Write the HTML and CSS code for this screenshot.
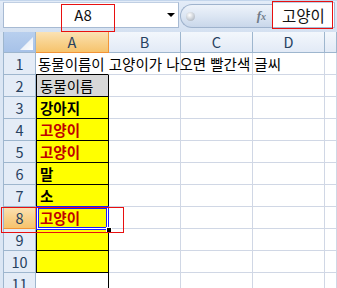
FILE: index.html
```html
<!DOCTYPE html>
<html lang="ko">
<head>
<meta charset="utf-8">
<link rel="stylesheet" href="styles.css">
</head>
<body>
<div class="app">
  <div class="toolbar">
    <div class="namebox">
      <span class="name">A8</span>
      <span class="dd"></span>
    </div>
    <div class="fbar">
      <span class="knob"></span>
      <span class="fx">f<span class="fxs">x</span></span>
    </div>
    <div class="finput">고양이</div>
  </div>
  <div class="sheet">
    <div class="corner"><svg width="15" height="15" viewBox="0 0 15 15"><defs><linearGradient id="tg" x1="0" y1="0" x2="1" y2="1"><stop offset="0" stop-color="#dde6f3"/><stop offset="1" stop-color="#ffffff"/></linearGradient></defs><polygon points="14,1 14,14 1,14" fill="url(#tg)"/></svg></div>
    <div class="ch sel">A</div><div class="ch">B</div><div class="ch">C</div><div class="ch">D</div><div class="ch"></div>

    <div class="rh">1</div><div class="c a1 long">동물이름이 고양이가 나오면 빨간색 글씨</div><div class="c"></div><div class="c"></div><div class="c"></div><div class="c"></div>
    <div class="rh">2</div><div class="c ab gray">동물이름</div><div class="c"></div><div class="c"></div><div class="c"></div><div class="c"></div>
    <div class="rh">3</div><div class="c ab yel b">강아지</div><div class="c"></div><div class="c"></div><div class="c"></div><div class="c"></div>
    <div class="rh">4</div><div class="c ab yel b red">고양이</div><div class="c"></div><div class="c"></div><div class="c"></div><div class="c"></div>
    <div class="rh">5</div><div class="c ab yel b red">고양이</div><div class="c"></div><div class="c"></div><div class="c"></div><div class="c"></div>
    <div class="rh">6</div><div class="c ab yel b">말</div><div class="c"></div><div class="c"></div><div class="c"></div><div class="c"></div>
    <div class="rh">7</div><div class="c ab yel b">소</div><div class="c"></div><div class="c"></div><div class="c"></div><div class="c"></div>
    <div class="rh sel">8</div><div class="c ab yel b red">고양이</div><div class="c"></div><div class="c"></div><div class="c"></div><div class="c"></div>
    <div class="rh">9</div><div class="c ab yel"></div><div class="c"></div><div class="c"></div><div class="c"></div><div class="c"></div>
    <div class="rh">10</div><div class="c ab yel"></div><div class="c"></div><div class="c"></div><div class="c"></div><div class="c"></div>
    <div class="rh">11</div><div class="c a11"></div><div class="c"></div><div class="c"></div><div class="c"></div><div class="c"></div>

    <div class="selbox"><span class="handle"></span></div>
  </div>
  <div class="mark mark-name"></div>
  <div class="mark mark-formula"></div>
  <div class="mark mark-row"></div>
</div>
</body>
</html>
```

FILE: styles.css
```css
* { box-sizing: border-box; }
html, body { margin: 0; padding: 0; }
body {
  width: 337px;
  height: 288px;
  overflow: hidden;
  background: #ffffff;
  font-family: "Noto Sans CJK KR", "Noto Sans", sans-serif;
}
.app {
  position: relative;
  width: 337px;
  height: 288px;
  overflow: hidden;
}
.toolbar {
  height: 32px;
  display: flex;
  align-items: flex-start;
  padding-top: 2px;
  padding-left: 3px;
  border-top: 1px solid #c4d6ec;
  background: linear-gradient(#e3ecf8, #d5e1f1);
}
.namebox {
  width: 176px;
  height: 26px;
  margin-top: -1px;
  background: #ffffff;
  border: 1px solid #a7bad3;
  border-top-color: #c0cfe3;
  display: flex;
  align-items: center;
}
.name {
  width: 158px;
  text-align: center;
  font-size: 15px;
  color: #111;
  line-height: 24px;
}
.dd {
  width: 0;
  height: 0;
  margin-left: 5px;
  border-left: 4px solid transparent;
  border-right: 4px solid transparent;
  border-top: 4px solid #000;
}
.fbar {
  width: 92px;
  height: 24px;
  margin-top: 1px;
  margin-left: 1px;
  border: 1px solid #9fb3cd;
  border-right: none;
  border-radius: 12px 0 0 12px;
  background: linear-gradient(#eef3fa, #dce6f3 50%, #c9d7ea);
  display: flex;
  align-items: center;
  padding-left: 5px;
}
.knob {
  width: 9px;
  height: 9px;
  border-radius: 50%;
  background: radial-gradient(circle at 40% 35%, #ffffff, #b9c0c9 70%, #9aa3ae);
}
.fx {
  margin-left: auto;
  margin-right: 6px;
  font-family: "Liberation Serif", serif;
  font-style: italic;
  font-weight: bold;
  font-size: 13px;
  color: #707b88;
  line-height: 20px;
}
.fxs { font-size: 10px; }
.finput {
  width: 63px;
  height: 26px;
  margin-top: -1px;
  background: #ffffff;
  border: 1px solid #a7bad3;
  border-top-color: #c0cfe3;
  font-size: 15.5px;
  line-height: 24px;
  padding-left: 9px;
  color: #111;
}
.sheet {
  position: relative;
  display: grid;
  grid-template-columns: 33px 73px 72px 72px 72px 1fr;
  grid-template-rows: 21px repeat(11, 22px);
  padding-left: 3px;
  background: #ffffff;
  height: 256px;
  overflow: hidden;
  box-shadow: inset 3px 0 0 #dbe6f4;
}
.corner {
  background: linear-gradient(#b8cfee, #a7c2e8);
  border-right: 1px solid #9eb6ce;
  border-bottom: 1px solid #9eb6ce;
  border-left: 1px solid #9eb6ce;
  display: flex;
  align-items: flex-end;
  justify-content: flex-end;
  padding: 0 1px 1px 0;
}
.corner svg { display: block; }
.ch {
  background: linear-gradient(#f3f7fc, #e2eaf6);
  border-right: 1px solid #9eb6ce;
  border-bottom: 1px solid #9eb6ce;
  text-align: center;
  font-size: 14.5px;
  line-height: 20px;
  color: #27415f;
}
.ch.sel, .rh.sel {
  background: linear-gradient(#fbe2b4, #f8d28e 50%, #f6c36d);
  border-color: #f29436;
}
.ch.sel { border-bottom: 1px solid #f29436; }
.rh {
  background: #e4ecf7;
  border-left: 1px solid #9eb6ce;
  border-right: 1px solid #9eb6ce;
  border-bottom: 1px solid #9eb6ce;
  text-align: center;
  font-size: 14.5px;
  line-height: 21px;
  color: #27415f;
}
.rh.sel { border-left-color: #9eb6ce; border-bottom-color: #f29436; }
.c {
  border-right: 1px solid #d0d7e5;
  border-bottom: 1px solid #d0d7e5;
  font-size: 14.5px;
  line-height: 22px;
  padding-left: 3px;
  white-space: nowrap;
  color: #000;
}
.long {
  overflow: visible;
  position: relative;
  z-index: 1;
  border-right-color: transparent;
}
.a1 { border-bottom: 1px solid #000; padding-left: 2px; }
.ab {
  border-left: 1px solid #000;
  border-right: 1px solid #000;
  border-bottom: 1px solid #000;
  padding-left: 3px;
}
.a11 { border-right-color: #000; }
.gray { background: #d8d8d8; }
.yel { background: #ffff00; }
.b { font-weight: 700; }
.red { color: #c00000; }
.selbox {
  position: absolute;
  left: 36px;
  top: 174px;
  width: 73px;
  height: 24px;
  border: 1px solid #1a1aff;
  box-shadow: inset 0 0 0 1px #ffffff, inset 0 0 0 2px #1a1aff;
}
.handle {
  position: absolute;
  right: -4px;
  bottom: -4px;
  width: 6px;
  height: 6px;
  background: #000;
  border: 1px solid #fff;
}
.mark {
  position: absolute;
  border: 1px solid #e81010;
  pointer-events: none;
}
.mark-name { left: 61px; top: 4px; width: 54px; height: 28px; }
.mark-formula { left: 272px; top: 1px; width: 61px; height: 28px; }
.mark-row { left: 1px; top: 207px; width: 123px; height: 26px; }
```
